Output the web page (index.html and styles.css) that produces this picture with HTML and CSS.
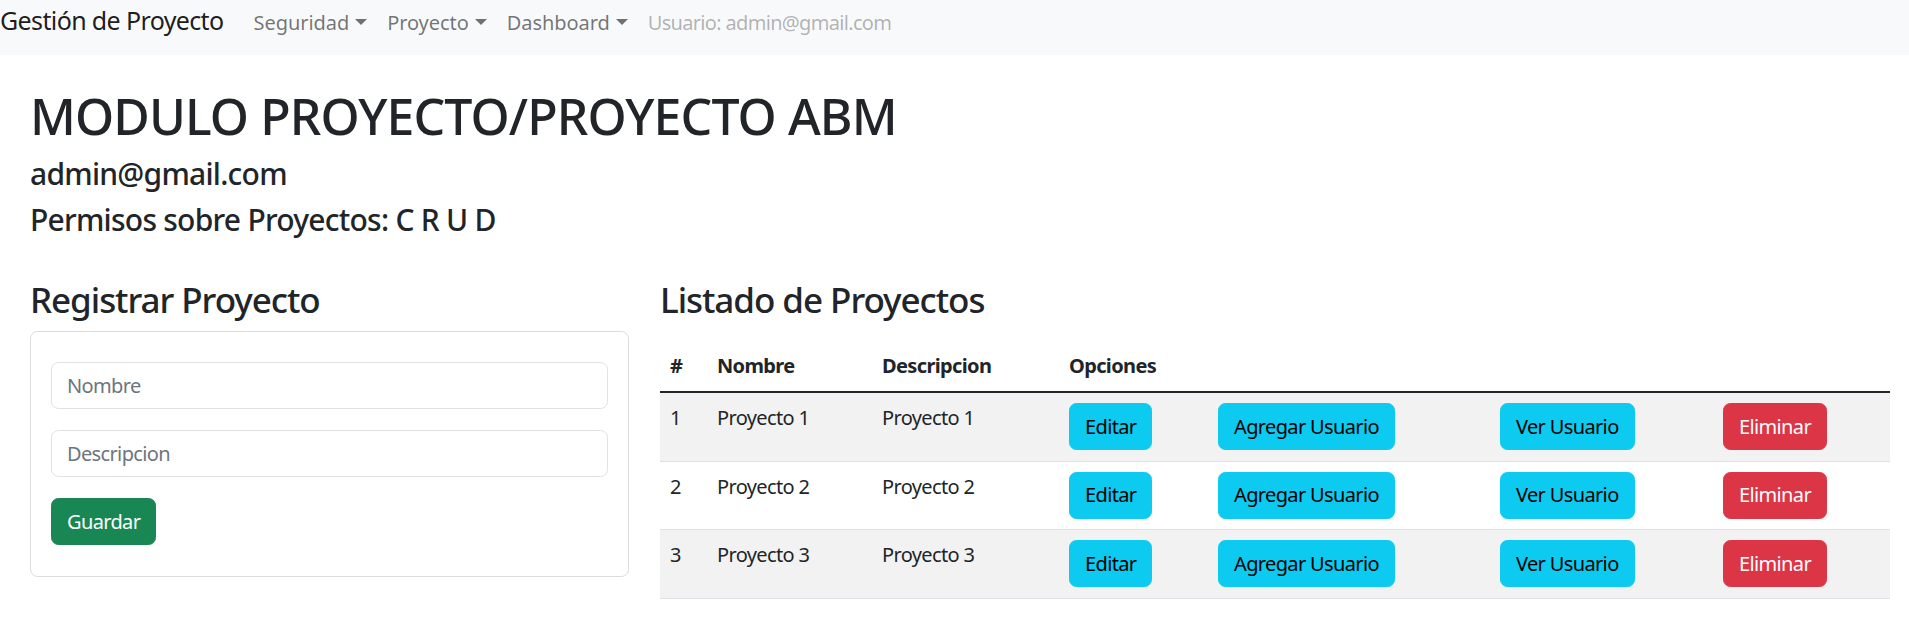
FILE: index.html
```html
<!DOCTYPE html>
<html lang="es">
<head>
<meta charset="utf-8">
<title>Gestión de Proyecto</title>
<link rel="stylesheet" href="styles.css">
</head>
<body>
<nav class="navbar">
  <a class="brand" href="#">Gestión de Proyecto</a>
  <ul class="nav">
    <li><a class="nav-link dropdown" href="#">Seguridad</a></li>
    <li><a class="nav-link dropdown" href="#">Proyecto</a></li>
    <li><a class="nav-link dropdown" href="#">Dashboard</a></li>
    <li><span class="nav-link disabled">Usuario: admin@gmail.com</span></li>
  </ul>
</nav>

<main class="page">
  <h1 class="title">MODULO PROYECTO/PROYECTO ABM</h1>
  <h4 class="subtitle">admin@gmail.com</h4>
  <h4 class="subtitle">Permisos sobre Proyectos: C R U D</h4>

  <div class="row">
    <section class="col-form">
      <h3 class="section-title">Registrar Proyecto</h3>
      <div class="card">
        <form class="form">
          <input class="input" type="text" placeholder="Nombre">
          <input class="input" type="text" placeholder="Descripcion">
          <button type="button" class="btn btn-success">Guardar</button>
        </form>
      </div>
    </section>

    <section class="col-list">
      <h3 class="section-title">Listado de Proyectos</h3>
      <table class="table">
        <colgroup>
          <col class="w-num"><col class="w-name"><col class="w-desc"><col class="w-edit"><col class="w-add"><col class="w-view"><col class="w-del">
        </colgroup>
        <thead>
          <tr><th>#</th><th>Nombre</th><th>Descripcion</th><th>Opciones</th><th></th><th></th><th></th></tr>
        </thead>
        <tbody>
          <tr>
            <td>1</td><td>Proyecto 1</td><td>Proyecto 1</td>
            <td><button class="btn btn-info">Editar</button></td>
            <td><button class="btn btn-info">Agregar Usuario</button></td>
            <td><button class="btn btn-info">Ver Usuario</button></td>
            <td><button class="btn btn-danger">Eliminar</button></td>
          </tr>
          <tr>
            <td>2</td><td>Proyecto 2</td><td>Proyecto 2</td>
            <td><button class="btn btn-info">Editar</button></td>
            <td><button class="btn btn-info">Agregar Usuario</button></td>
            <td><button class="btn btn-info">Ver Usuario</button></td>
            <td><button class="btn btn-danger">Eliminar</button></td>
          </tr>
          <tr>
            <td>3</td><td>Proyecto 3</td><td>Proyecto 3</td>
            <td><button class="btn btn-info">Editar</button></td>
            <td><button class="btn btn-info">Agregar Usuario</button></td>
            <td><button class="btn btn-info">Ver Usuario</button></td>
            <td><button class="btn btn-danger">Eliminar</button></td>
          </tr>
        </tbody>
      </table>
    </section>
  </div>
</main>
</body>
</html>
```

FILE: styles.css
```css
* { box-sizing: border-box; letter-spacing: -0.032em; }

body {
  margin: 0;
  font-family: "Noto Sans", "Open Sans", sans-serif;
  font-size: 20px;
  line-height: 1.5;
  color: #212529;
  background: #fff;
}

/* Navbar */
.navbar {
  height: 55px;
  background: #f8f9fa;
  display: flex;
  align-items: baseline;
  padding-top: 2px;
}
.brand {
  font-size: 25px;
  line-height: 37.5px;
  color: rgba(0, 0, 0, 0.9);
  text-decoration: none;
  margin-right: 20px;
  letter-spacing: -0.025em;
}
.nav {
  list-style: none;
  margin: 0;
  padding: 0;
  display: flex;
  align-items: baseline;
}
.nav-link {
  display: block;
  padding: 0 10px;
  color: rgba(0, 0, 0, 0.55);
  text-decoration: none;
  line-height: 30px;
  letter-spacing: -0.003em;
}
.nav-link.disabled {
  color: rgba(0, 0, 0, 0.3);
  letter-spacing: -0.034em;
}
.dropdown::after {
  content: "";
  display: inline-block;
  margin-left: 6px;
  vertical-align: 5px;
  border-top: 6px solid;
  border-left: 6px solid transparent;
  border-right: 6px solid transparent;
}

/* Page */
.page {
  padding: 31px 19px 0 30px;
}
.title {
  font-size: 50px;
  font-weight: 500;
  line-height: 1.2;
  margin: 0 0 10px;
  letter-spacing: -0.018em;
}
.subtitle {
  font-size: 30px;
  font-weight: 500;
  line-height: 1.2;
  margin: 0 0 10px;
  letter-spacing: -0.025em;
}
.row {
  display: grid;
  grid-template-columns: 599px 1fr;
  column-gap: 31px;
  margin-top: 41px;
}
.section-title {
  font-size: 35px;
  font-weight: 500;
  line-height: 1.2;
  margin: 0 0 10px;
  letter-spacing: -0.03em;
}

/* Card + form */
.card {
  border: 1.25px solid #dcdcdc;
  border-radius: 7.5px;
  padding: 30px 20px 31px;
}
.form {
  display: flex;
  flex-direction: column;
  align-items: flex-start;
}
.input {
  width: 100%;
  font: inherit;
  line-height: 30px;
  padding: 7.5px 15px;
  border: 1.25px solid #dee2e6;
  border-radius: 7.5px;
  margin: 0 0 21px;
  color: #212529;
}
.input::placeholder { color: #6c757d; }

/* Buttons */
.btn {
  font: inherit;
  line-height: 30px;
  padding: 7.5px 15px;
  border: 1.25px solid transparent;
  border-radius: 7.5px;
  cursor: pointer;
  white-space: nowrap;
}
.btn-success { background: #198754; border-color: #198754; color: #fff; }
.btn-info { background: #0dcaf0; border-color: #0dcaf0; color: #000; }
.btn-danger { background: #dc3545; border-color: #dc3545; color: #fff; }

/* Table */
.table {
  width: 100%;
  table-layout: fixed;
  border-collapse: collapse;
  margin-top: 20px;
}
.w-num { width: 47px; }
.w-name { width: 165px; }
.w-desc { width: 187px; }
.w-edit { width: 149px; }
.w-add { width: 282px; }
.w-view { width: 223px; }
.w-del { width: 177px; }
.table th,
.table td {
  padding: 10px;
  text-align: left;
  vertical-align: top;
  line-height: 30px;
}
.table th {
  font-weight: 700;
  border-bottom: 2.5px solid #212529;
}
.table td {
  padding-bottom: 10.5px;
  border-bottom: 1.25px solid #dee2e6;
}
.table tbody tr:nth-child(odd) td { background: #f2f2f2; }
```
